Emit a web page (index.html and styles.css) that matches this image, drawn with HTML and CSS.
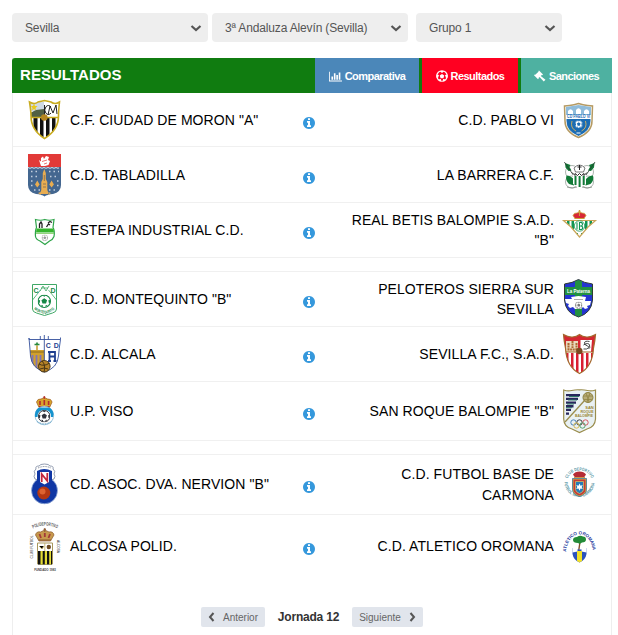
FILE: index.html
```html
<!DOCTYPE html>
<html lang="es">
<head>
    <meta charset="UTF-8">
    <meta name="viewport" content="width=device-width, initial-scale=1.0">
    <title>Resultados</title>
    <link rel="stylesheet" href="styles.css">
</head>
<body>
    <svg class="defs" width="0" height="0">
        <symbol id="info" viewBox="0 0 1792 1792"><path d="M1152 1376v-160q0-14-9-23t-23-9h-96v-512q0-14-9-23t-23-9h-320q-14 0-23 9t-9 23v160q0 14 9 23t23 9h96v320h-96q-14 0-23 9t-9 23v160q0 14 9 23t23 9h448q14 0 23-9t9-23zm-128-896v-160q0-14-9-23t-23-9h-192q-14 0-23 9t-9 23v160q0 14 9 23t23 9h192q14 0 23-9t9-23zm640 416q0 209-103 385.5t-279.5 279.5-385.5 103-385.5-103-279.5-279.5-103-385.5 103-385.5 279.5-279.5 385.5-103 385.5 103 279.5 279.5 103 385.5z"/></symbol>
        <symbol id="down" viewBox="0 0 12 8"><path d="M1.500 2 6 6l4.500-4" fill="none" stroke="#555" stroke-width="2.200"/></symbol>
        <symbol id="ball" viewBox="0 0 20 20"><circle cx="10" cy="10" r="9.200" fill="#fff" stroke="currentColor" stroke-width="1.600"/><path fill="currentColor" d="M10 5.500l4.200 3-1.600 5H7.400l-1.600-5zM7 1h6l-3 2.500zM1 8l3 .5L3 13l-2-1zM19 8l-3 .5 1 4.500 2-1zM5 15.500l3 .5v3zM15 15.500l-3 .5v3z"/></symbol>
    </svg>

    <form class="filters">
        <div class="select">Sevilla <svg width="12" height="8"><use href="#down"/></svg></div>
        <div class="select">3ª Andaluza Alevín (Sevilla) <svg width="12" height="8"><use href="#down"/></svg></div>
        <div class="select select-group">Grupo 1 <svg width="12" height="8"><use href="#down"/></svg></div>
    </form>

    <div class="panel">
        <div class="panel-header">
            <h1>RESULTADOS</h1>
            <a class="tab tab-blue">
                <svg width="13" height="11" viewBox="0 128 2048 1536"><path d="M640 896v512h-256v-512h256zm384-512v1024h-256v-1024h256zm1024 1152v128h-2048v-1536h128v1408h1920zm-640-896v768h-256v-768h256zm384-384v1152h-256v-1152h256z"/></svg>
                <span>Comparativa</span>
            </a>
            <a class="tab tab-red">
                <svg width="12" height="12" viewBox="0 0 24 24"><circle cx="12" cy="12" r="10.500" fill="none" stroke="#fff" stroke-width="2.400"/><path d="M12 8l4.500 3.200-1.700 5.300H9.200l-1.700-5.300zM7 2h10l-5 4zM1 9l5 1-2 6-3-1zM23 9l-5 1 2 6 3-1zM5 19l5-1v5zM19 19l-5-1v5z"/></svg>
                <span>Resultados</span>
            </a>
            <a class="tab tab-teal">
                <svg width="12" height="12" viewBox="0 0 24 24"><path d="M10 1l8 8-1.500 1.500-1-.5-2 2L23 19.500 19.500 23 11 14l-2 2 .5 1L8 18.500 0 10.500 1.500 9l1 .5 7-6.500-1-.5z"/></svg>
                <span>Sanciones</span>
            </a>
        </div>

        <div class="match">
            <svg class="crest" width="36" height="53" viewBox="0 0 36 53">
                <clipPath id="moron"><path d="M2.500 9q5 3 8.500 0l6.500-1.500L24 9q4 3 8.500 0-1 9-1 14 0 14-14 22.500Q4 37 4 23 4 18 2.500 9z"/></clipPath>
                <g clip-path="url(#moron)">
                    <path fill="#fff" d="M0 0h36v53H0z"/>
                    <path fill="#cfd9e4" d="M3 9h14v9H3z"/><path fill="#516044" d="M3 20l6-3 8-1v8H3z"/>
                    <path fill="#111" d="M6.500 25h4v20h-4zM13 25h3.500v21H13zM19 25h3.500v21H19zM25 25h3.500v20H25z"/>
                </g>
                <path fill="#e9c91c" d="M7 10.500l1 2.500h2.500L8.500 15l.5 2.500-2-1.500L5 17.500 5.500 15 4 13h2z"/>
                <path fill="none" stroke="#222" d="M24 14a3.500 4.500 0 1 0 0 6M21 22l2-9 3 7 3-8 1 9M17.500 12v10"/>
                <path fill="none" stroke="#c9ac20" stroke-width="1.600" d="M2.500 9q5 3 8.500 0l6.500-1.500L24 9q4 3 8.500 0-1 9-1 14 0 14-14 22.500Q4 37 4 23 4 18 2.500 9zM4 24.500h27"/>
                <circle cx="17.300" cy="24.500" r="3.300" fill="#b58520"/>
            </svg>
            <div class="team">C.F. CIUDAD DE MORON "A"</div>
            <svg class="info" width="14" height="14"><use href="#info"/></svg>
            <div class="team away">C.D. PABLO VI</div>
            <svg class="crest" width="36" height="53" viewBox="0 0 36 53">
                <path fill="#fff" stroke="#b59a62" stroke-width="1.500" d="M3.500 13l5-.5Q13 12 17.500 10.500q4.500 1.500 9 2l5 .5-.5 15q0 11-13.500 16.500Q4 39 4 28z"/>
                <path fill="#8fbcdb" d="M5 14l12.500-2L30 14v8H5z"/>
                <path fill="#fff" d="M7 21v-3q2.500-3.500 5 0v3zM15 21v-4q2.500-3.500 5 0v4zM23 21v-3q2.500-3.500 5 0v3z"/>
                <path fill="#1b6cb3" d="M5.500 26h24v2q0 10-12 15Q5.500 38 5.500 28z"/>
                <text class="micro" x="17.600" y="25.400" font-size="4.500" font-weight="bold" textLength="23" lengthAdjust="spacingAndGlyphs" fill="#1b6cb3">CD PABLO VI</text>
                <path fill="none" stroke="#c7ac67" d="M11 28q-2 7 4 10M24.500 28q2 7-4 10"/>
                <svg x="13.500" y="27" width="8.500" height="8.500" color="#1b6cb3"><use href="#ball"/></svg>
                <path stroke="#fff" d="M15.500 40h4"/>
            </svg>
        </div>

        <div class="match">
            <svg class="crest" width="36" height="55" viewBox="0 0 36 55">
                <path fill="#446790" d="M1 20h33v18q0 7-8 9-6 .5-8.500 2.500Q15 47.500 9 47q-8-2-8-9z"/>
                <path fill="#e23a38" d="M1 7h33v13H1z"/>
                <path fill="none" stroke="#fff" stroke-width=".8" d="M1 20.500l2 .8 2-.8 2 .8 2-.8 2 .8 2-.8 2 .8 2-.8 2 .8 2-.8 2 .8 2-.8 2 .8 2-.8 2 .8 1-.5"/>
                <path fill="#fff" d="M12 13l2 1.500V11l2-1.500 1 2.500 2-3 3 1-1 3 2 1-1.500 4L18 19h-4z"/>
                <path stroke="#e23a38" stroke-width=".7" d="M15 14.500l5-1.500M17 17l3-1"/>
                <path fill="none" stroke="#c3cfdd" stroke-width="1.400" stroke-dasharray="1.500 3" d="M4 24.500h9M22 24.500h10M4 29.500h8M23 29.500h9M4 34h3M30 34h3M4 38.500h3M30 38.500h3M7 43h6M22 43h7"/>
                <path fill="#e9ad51" d="M17.300 22l1.500 4v6l1.500 3v8l1.500 4h-9l1.500-4v-8l1.500-3v-6zM8 37.500l2.300-4 2.300 4-2.300 3zM22.300 37.500l2.300-4 2.300 4-2.300 3zM11 46l3-1v3zM24 46l-3-1v3z"/>
                <path stroke="#6b6058" stroke-width=".7" d="M17.300 28v6M16 37h3M16 40h3"/>
            </svg>
            <div class="team">C.D. TABLADILLA</div>
            <svg class="info" width="14" height="14"><use href="#info"/></svg>
            <div class="team away">LA BARRERA C.F.</div>
            <svg class="crest" width="36" height="55" viewBox="0 0 36 55">
                <g fill="#fff" stroke="#8a938c" stroke-width=".7"><circle cx="11" cy="25" r="6.500"/><circle cx="26" cy="25" r="6.500"/><circle cx="10.500" cy="35" r="6"/><circle cx="26.500" cy="35" r="6"/></g>
                <path fill="#117a37" d="M4 16l5.500 2-1 2 2 3.500-3 .5-3-3.500zM33.500 16L28 18l1 2-2 3.500 3 .5 3-3.500z"/>
                <path stroke="#2b3b30" stroke-width=".8" d="M3.300 15l9 13M34 15l-9 13"/>
                <path fill="#117a37" d="M5.500 28.500q4 0 7.500 4v6l-5-1.500q-4-4-2.500-8.500zM32 28.500q-4 0-7.500 4v6l5-1.500q4-4 2.500-8.500z"/>
                <path fill="#fff" d="M12 24h13v13l-6.500 4L12 37z"/>
                <path fill="#117a37" d="M13.500 29h2v9h-2zM17.600 29h2v11h-2zM21.700 29h2v9h-2z"/>
                <path fill="#fff" stroke="#555" stroke-width=".8" d="M13 21q5.500-6 11 0l-1.500 4h-8z"/>
                <path fill="none" stroke="#222" d="M18.500 18v5M16.500 20h4M11 25.500l3 3v-2l2.500 2 2-2 2 2 2.500-2v2l3-3"/>
                <path fill="none" stroke="#8a938c" stroke-width=".9" d="M6 40q6 2 10 0M21 40q5 2 10 0"/>
            </svg>
        </div>

        <div class="match">
            <svg class="crest" width="36" height="54" viewBox="0 0 36 54">
                <path fill="#fff" stroke="#2da449" stroke-width="1.200" d="M8.500 16.500q5 1.500 9.300 0 4.500 1.500 9.200 0l-1 8q2 3 1 9-1 3-4.500 4.500L18 41.500 13 38q-4-1.500-4.500-4.500-.5-6 1-9z"/>
                <path fill="#35b52c" d="M9.500 25.500h17l.5 4H9z"/>
                <path fill="none" stroke="#222" stroke-width="1.300" d="M12.500 25v-4l1.500-2 1 2v4M19.500 24l2-3 1.500 1M21 20l2-1.500 2 1"/>
                <path stroke="#77c85a" stroke-width=".8" d="M9 30.500h18"/>
                <svg x="14.500" y="31.500" width="6.500" height="6.500" color="#9a9a9a"><use href="#ball"/></svg>
            </svg>
            <div class="team">ESTEPA INDUSTRIAL C.D.</div>
            <svg class="info" width="14" height="14"><use href="#info"/></svg>
            <div class="team away">REAL BETIS BALOMPIE S.A.D. "B"</div>
            <svg class="crest" width="36" height="54" viewBox="0 0 36 54">
                <clipPath id="betis"><path d="M2.500 17.500h32L27 24l-8.500 10L10 24z"/></clipPath>
                <g clip-path="url(#betis)"><path fill="#fff" d="M0 17h36v18H0z"/><path fill="#119653" d="M6 17h2.500v18H6zM10.500 17H13v18h-2.500zM24 17h2.500v18H24zM28.500 17H31v18h-2.500zM15 30h2v4h-2zM20 30h2v4h-2z"/></g>
                <path fill="none" stroke="#c9a558" stroke-width="1.200" d="M2.500 17.500h32L27 24l-8.500 10L10 24z"/>
                <circle cx="18.500" cy="23" r="5.200" fill="#fff" stroke="#119653" stroke-width=".8"/>
                <path fill="none" stroke="#119653" stroke-width="1.100" d="M16 19.500v7M18.500 19.500h2q2 1.700 0 3.500h-2zM18.500 23h2q2.500 1.700 0 3.500h-2z"/>
                <path fill="#d82736" stroke="#caa13c" stroke-width=".8" d="M14 15.500l-2-3q1-3 4-2.500l2.500-1 2.500 1q3-.5 4 2.500l-2 3z"/>
                <path stroke="#caa13c" stroke-width="1.100" d="M18.500 7v6M17.300 8.200h2.400M13.500 15.500h10"/>
            </svg>
        </div>

        <div class="gap"></div>

        <div class="match">
            <svg class="crest" width="36" height="54" viewBox="0 0 36 54">
                <path fill="#fff" stroke="#3fa866" stroke-width="1" d="M5.500 12.500h24V37q0 3-4 4l-8 2.500L9.500 41q-4-1-4-4z"/>
                <path fill="none" stroke="#3fa866" stroke-width=".8" d="M5.500 28l8-10M29.500 28l-8-10M13 19l3-5 3 5 3-5M14 16h7"/>
                <text class="micro" x="9" y="20.500" font-size="7" font-weight="bold" fill="#168846">C</text>
                <text class="micro" x="26" y="20.500" font-size="7" font-weight="bold" fill="#168846">D</text>
                <svg x="10.500" y="22.500" width="13.500" height="13.500" color="#168846"><use href="#ball"/></svg>
                <path id="monte" fill="none" d="M7 37q10.500 9 21 0"/>
                <text class="micro arc" font-size="4" font-weight="bold" fill="#168846"><textPath href="#monte" textLength="23" lengthAdjust="spacingAndGlyphs">MONTEQUINTO</textPath></text>
            </svg>
            <div class="team">C.D. MONTEQUINTO "B"</div>
            <svg class="info" width="14" height="14"><use href="#info"/></svg>
            <div class="team away">PELOTEROS SIERRA SUR SEVILLA</div>
            <svg class="crest" width="36" height="54" viewBox="0 0 36 54">
                <path fill="#2434d0" stroke="#303b34" d="M3.500 12q8-1 14-4.500Q23 11 31.500 12v16q-1 13-14 17Q4.500 41 3.500 28z"/>
                <path fill="#229141" d="M14 9.500l3.500-1.500L21 9.500V43l-3.500 1.500L14 43zM4 15h27v8H4z"/>
                <text class="micro" x="17.500" y="21" font-size="5" font-weight="bold" textLength="23" lengthAdjust="spacingAndGlyphs" fill="#fff">La Paterna</text>
                <path fill="#fff" d="M10 25l7.500-1L25 25l-1 4h6l-1 4-3 1 1 2-3 1-2-2-2 2h-6l-2-2-3 1-2-2 1-2-3-1-1-4h7z"/>
                <path stroke="#8a8a8a" stroke-width=".7" d="M13 27.500h9"/>
                <svg x="14" y="29.500" width="7.500" height="7.500" color="#777"><use href="#ball"/></svg>
            </svg>
        </div>

        <div class="match">
            <svg class="crest" width="36" height="54" viewBox="0 0 36 54">
                <clipPath id="alcala"><path d="M2 11.500h31.500Q32 22 31.500 29q-1 12-14 16-13-4-14-16Q3 22 2 11.500z"/></clipPath>
                <g clip-path="url(#alcala)">
                    <path fill="#fff" d="M0 0h36v54H0z"/><path fill="#d0a02c" d="M2 23h15.500v22H2z"/>
                    <path stroke="#7f74b6" stroke-width="1.800" d="M5.500 28v12M9.500 28v14M13.500 28v14"/><path stroke="#8a6b1c" d="M2 25h15"/>
                </g>
                <path stroke="#2a8a3d" stroke-width="1.700" d="M7.500 17.500h5M10 15.500v3"/><path stroke="#c99a29" stroke-width="1.500" d="M10 18.500V23"/>
                <path fill="none" stroke="#34509c" stroke-width=".9" d="M2 12.500h31.500Q32 22 31.500 29q-1 12-14 16-13-4-14-16Q3 22 2 11zM13.300 9v3.500M17.300 8v32M21.300 9v3.500M33.500 10.500v2"/>
                <text class="micro" x="25.300" y="20.500" font-size="7" font-weight="bold" textLength="13" fill="#1f3f8f">CD</text>
                <path fill="none" stroke="#1f3f8f" stroke-width="1.800" d="M22.500 34v-9h5.500v9M22.500 29.500H28M21 34h3M26.500 34h3M21 25h2"/>
                <circle cx="17.300" cy="39.300" r="5.800" fill="#b58227" stroke="#3b2b13" stroke-width=".9"/>
                <path fill="none" stroke="#3b2b13" stroke-width=".9" d="M12 37q5 3 10.500-1M15 34q4 4 2 11M13 42q4-2 8 0"/>
            </svg>
            <div class="team">C.D. ALCALA</div>
            <svg class="info" width="14" height="14"><use href="#info"/></svg>
            <div class="team away">SEVILLA F.C., S.A.D.</div>
            <svg class="crest" width="36" height="54" viewBox="0 0 36 54">
                <clipPath id="sfc"><path d="M2.500 7.500q5 3 9 2.500 4 0 7-2.500 3 2.500 7 2.500 4 .5 9-2.500-.5 7-2 13.500-1 19-14 25.500Q5.500 40 4.500 21 3 14 2.500 7.500z"/></clipPath>
                <g clip-path="url(#sfc)">
                    <path fill="#d52631" d="M0 0h36v25H0z"/><path fill="#fff" d="M0 25h36v25H0z"/>
                    <path fill="#e9d9bd" d="M5 14h12v11H5z"/><path fill="#fff" d="M19.500 13H31l-1 12H19.500z"/>
                    <path fill="#d91f32" d="M5 26h2.500v20H5zM10 26h2.500v20H10zM15 26h2.500v20H15zM20 26h2.500v20H20zM25 26h2.500v20H25zM30 26h2v20h-2z"/>
                </g>
                <path stroke="#ad6932" stroke-width="2" stroke-dasharray="2 .6" d="M7.500 16v6M11.500 14v7M15.500 16v6M6.500 22.500h10"/>
                <path fill="none" stroke="#333" stroke-width=".9" d="M28.500 14.500q-5-1-5 1.500 0 2 3 3t-1 3h-3M22.500 18q5-3 6 0t-1 4"/>
                <path fill="none" stroke="#a4682d" stroke-width="1.200" d="M2.500 7.500q5 3 9 2.500 4 0 7-2.500 3 2.500 7 2.500 4 .5 9-2.500-.5 7-2 13.500-1 19-14 25.500Q5.500 40 4.500 21 3 14 2.500 7.500zM4.500 25h28"/>
                <circle cx="18.300" cy="24" r="3.200" fill="#7b4a22"/>
            </svg>
        </div>

        <div class="match">
            <svg class="crest" width="36" height="58" viewBox="0 0 36 58">
                <path fill="#d9a42c" stroke="#9c5a20" stroke-width=".7" d="M12 25.500L9.500 20q1-3.500 4.500-3l3.300-1.500L20.600 17q3.500-.5 4.500 3l-2.500 5.500z"/>
                <path stroke="#b52b2b" stroke-width="1.600" d="M13 19v4M17.300 18v5M21.600 19v4"/><path stroke="#b52b2b" d="M17.300 14v3M16.300 15.200h2M12 24.500h10.500"/>
                <circle cx="17.300" cy="33.500" r="9.300" fill="#fff" stroke="#86b9d6" stroke-width=".8"/>
                <path fill="#1693ce" d="M8 32q1-6 5-6.500h8.600q4 1 5 6.500l-.5 3h-2q0-7-6.800-7T10.500 35H8z"/>
                <svg x="11" y="28" width="12.500" height="12.500" color="#30343c"><use href="#ball"/></svg>
                <path fill="none" stroke="#7aaecd" stroke-width="1.300" stroke-dasharray="1 .7" d="M10 39.500q7.300 5 14.600 0"/>
            </svg>
            <div class="team">U.P. VISO</div>
            <svg class="info" width="14" height="14"><use href="#info"/></svg>
            <div class="team away">SAN ROQUE BALOMPIE "B"</div>
            <svg class="crest" width="36" height="58" viewBox="0 0 36 58">
                <path fill="#e9f1f3" stroke="#9a8d4d" stroke-width="1.200" d="M2.700 8q4 1.500 8 .5 4-1 7.800-.7 4-.3 8 .7 4 1 8-.5v29q-.5 8-8.500 10l-7.500 3.500L11 47q-8-2-8.300-10z"/>
                <path fill="#28275c" d="M5 12h14v2.300H5zM5 15.700h12V18H5zM5 19.400h10v2.300H5zM5 23.100h7.500v2.300H5zM5 26.800h5v2.300H5zM5 30.500h3v2.300H5z"/>
                <path stroke="#2c7764" d="M8 14.500h10M7 18h9M6 22h7M5 25.700h6"/>
                <path stroke="#9a8d4d" stroke-width="1.300" d="M4 40l20-22"/>
                <circle cx="27" cy="15.500" r="5" fill="#b8ad78" stroke="#8d813f"/><path stroke="#8d813f" stroke-width=".7" d="M22.500 14h9M23 17.500h8M25 11l3 9M29 11l-3 9"/>
                <text class="micro" x="28.500" y="27.300" font-size="4" font-weight="bold" fill="#9a8430">SAN</text>
                <text class="micro" x="26" y="31.300" font-size="4" font-weight="bold" textLength="13" lengthAdjust="spacingAndGlyphs" fill="#9a8430">ROQUE</text>
                <text class="micro" x="23" y="35.300" font-size="4" font-weight="bold" textLength="18" lengthAdjust="spacingAndGlyphs" fill="#9a8430">BALOMPIE</text>
                <g fill="none" stroke-width=".9"><circle cx="12.500" cy="40.500" r="2.700" stroke="#3d79b5"/><circle cx="18.500" cy="40.500" r="2.700" stroke="#333"/><circle cx="24.500" cy="40.500" r="2.700" stroke="#d14a53"/><circle cx="15.500" cy="43.500" r="2.700" stroke="#d9b544"/><circle cx="21.500" cy="43.500" r="2.700" stroke="#479b62"/></g>
            </svg>
        </div>

        <div class="gap"></div>

        <div class="match lifted">
            <svg class="crest" width="36" height="59" viewBox="0 0 36 59">
                <ellipse cx="17.500" cy="35.500" rx="13" ry="13.300" fill="#1037a4" stroke="#9eb4d8" stroke-width=".7"/>
                <path fill="#fff" stroke="#8792a8" stroke-width=".9" d="M8 24q-2-3 0-5-2-3 1-5-1-3 3-3 1-2 5.500-2t5.500 2q4 0 3 3 3 2 1 5 2 2 0 5l-3 1-1-9H12l-1 9z"/>
                <path fill="none" stroke="#7e8796" stroke-dasharray="1 .7" d="M11 13q6.500-3 13 0"/>
                <path fill="#1037a4" d="M10 16q7-4 15 0v14H10z"/>
                <path fill="#fff" d="M13 17h9v10l-4.500 2.500L13 27z"/>
                <path fill="none" stroke="#c2263b" stroke-width="1.800" d="M14.700 27v-8l5.600 7v-8"/>
                <circle cx="16.800" cy="38" r="6.500" fill="#b43712"/><circle cx="15.500" cy="36.500" r="3" fill="#dd6331"/>
            </svg>
            <div class="team">CD. ASOC. DVA. NERVION "B"</div>
            <svg class="info" width="14" height="14"><use href="#info"/></svg>
            <div class="team away tall">C.D. FUTBOL BASE DE CARMONA</div>
            <svg class="crest" width="36" height="59" viewBox="0 0 36 59">
                <path id="carTop" fill="none" d="M6.500 23.500a13 13 0 0 1 24 0"/>
                <path id="carBottom" fill="none" d="M3.500 27a15 15 0 0 0 30 0"/>
                <text class="micro arc" font-size="4.500" font-weight="bold" fill="#5795a5"><textPath href="#carTop" textLength="30" lengthAdjust="spacingAndGlyphs">CLUB DEPORTIVO</textPath></text>
                <text class="micro arc" font-size="4.500" font-weight="bold" fill="#5795a5"><textPath href="#carBottom" textLength="46" lengthAdjust="spacingAndGlyphs">FUTBOL BASE CARMONA</textPath></text>
                <path fill="#b52c35" d="M14 22.500l-2-3q2-3 6.500-3t6.500 3l-2 3z"/><path stroke="#c9974b" d="M13 22.500h11"/>
                <path fill="#d3b33c" stroke="#26689b" stroke-width=".7" d="M11.500 23.500h14v11q0 5-7 7-7-2-7-7z"/>
                <path fill="#c43a3b" d="M12.500 24.500h12v10q0 4-6 6-6-2-6-6z"/><path fill="#267bb9" stroke="#e6c55c" stroke-width=".7" d="M14.500 26.500h8v8q0 2.500-4 4-4-1.500-4-4z"/>
                <path fill="#fff" d="M18.500 28.500l1 2.200 2.200-.7-1 2 1 2-2.200-.5-1 2.300-1-2.300-2.200.5 1-2-1-2 2.200.7z"/>
            </svg>
        </div>

        <div class="match last lifted">
            <svg class="crest" width="36" height="63" viewBox="0 0 36 63">
                <path id="alcTop" fill="none" d="M6 13.500q12-6 24 0"/>
                <text class="micro arc" font-size="5" font-weight="bold" fill="#555"><textPath href="#alcTop" textLength="25" lengthAdjust="spacingAndGlyphs">POLIDEPORTIVO</textPath></text>
                <text class="micro" transform="translate(5.500 32) rotate(-90)" font-size="3.800" textLength="23" lengthAdjust="spacingAndGlyphs" fill="#333">CLUB FUTBOL</text>
                <text class="micro" transform="translate(30 31.500) rotate(90)" font-size="3.800" textLength="13" lengthAdjust="spacingAndGlyphs" fill="#333">ALCOSA</text>
                <path fill="#c79a4d" stroke="#8b572e" stroke-width=".7" d="M12 26l-3.500-6q1-4 5-3l4.300-2 4.200 2q4-1 5 3l-3.500 6z"/>
                <path stroke="#a33a38" stroke-width="1.800" d="M12.500 19l1.500 4M17.800 18v4M23 19l-1.500 4"/><path stroke="#8b572e" d="M17.800 13v4M16.500 14.300h2.500M11.500 25h12.500"/>
                <path fill="#fff" stroke="#a8975c" d="M10.500 28h15v21h-15z"/>
                <path fill="#111" d="M11 36h14v13.500H11z"/><path fill="#e4dc35" d="M13.500 36h2.200v13.500h-2.200zM17.800 36H20v13.500h-2.200zM22.200 36h1.800v13.500h-1.800z"/>
                <circle cx="21.800" cy="32" r="2.200" fill="#6d4a22"/><path stroke="#c0ae62" stroke-width=".8" d="M17.800 28v8M12 31l3 3 2-3"/>
                <text class="micro" x="18" y="56" font-size="2.900" font-weight="bold" fill="#444">FUNDADO 1983</text>
            </svg>
            <div class="team">ALCOSA POLID.</div>
            <svg class="info" width="14" height="14"><use href="#info"/></svg>
            <div class="team away">C.D. ATLETICO OROMANA</div>
            <svg class="crest" width="36" height="63" viewBox="0 0 36 63">
                <path id="oro" fill="none" d="M5 37C7 13.500 30 13.500 32 37"/>
                <text class="micro arc" font-size="4.500" font-weight="bold" fill="#23369c"><textPath href="#oro" textLength="47" lengthAdjust="spacingAndGlyphs">ATLETICO OROMANA</textPath></text>
                <path stroke="#80502d" stroke-width="1.400" d="M19 27l-1.500 10"/>
                <path fill="#238b38" d="M12 25q0-3 4-3 3-2 6-.5 3 0 3 3 0 3-4 3-2 2-4 .5-5 0-5-3z"/>
                <path fill="#2c52bd" d="M11.500 33q7 3 14 0v6q-1 6-7 8.500-6-2.500-7-8.500z"/><path fill="#fff" d="M11.500 32.500l5 1v3l-5 1zM25.500 32.500l-5 1v3l5 1z"/>
                <path fill="#f0e028" d="M16 36h5v10l-2.500 1.500L16 46z"/>
            </svg>
        </div>

        <div class="pager">
            <button class="pager-btn"><svg width="7" height="10" viewBox="0 0 7 10"><path d="M5.500 1L2 5l3.500 4"/></svg>Anterior</button>
            <strong>Jornada 12</strong>
            <button class="pager-btn next">Siguiente<svg width="7" height="10" viewBox="0 0 7 10"><path d="M1.500 1L5 5 1.500 9"/></svg></button>
        </div>
    </div>
</body>
</html>
```
FILE: styles.css
```css
* {
    box-sizing: border-box;
}
body {
    margin: 0;
    padding: 13px 6px 0 12px;
    background: #fff;
    font-family: "Liberation Sans", Arial, sans-serif;
    color: #000;
}
.defs {
    position: absolute;
}
.filters {
    display: flex;
    gap: 4px;
    margin-bottom: 16px;
}
.select {
    display: flex;
    align-items: center;
    justify-content: space-between;
    width: 196px;
    height: 29px;
    padding: 0 6px 0 13px;
    border-radius: 4px;
    background: #eee;
    color: #555;
    font-size: 12px;
    letter-spacing: -0.15px;
}
.select-group {
    width: 146px;
    margin-left: 4px;
}
.panel {
    border: 1px solid #eee;
    border-width: 0 1px;
}
.panel-header {
    display: flex;
    height: 35px;
    margin: 0 -1px;
    background: #107c10;
    border-radius: 3px 0 0 0;
    color: #fff;
}
.panel-header h1 {
    flex: 1;
    margin: 0;
    padding-left: 8px;
    font-size: 15px;
    line-height: 34px;
    letter-spacing: 0.05px;
}
.tab {
    display: flex;
    align-items: center;
    justify-content: center;
    gap: 3px;
    padding-top: 1px;
    font-size: 11px;
    font-weight: bold;
    letter-spacing: -0.55px;
}
.tab svg {
    fill: #fff;
}
.tab-blue {
    width: 104px;
    margin-right: 3px;
    background: #4b87b9;
}
.tab-red {
    width: 96px;
    margin-right: 3px;
    background: #ff0021;
}
.tab-teal {
    width: 91px;
    background: #4eb1a1;
}
.match {
    display: grid;
    grid-template-columns: 36px 210px 72px 209px 36px;
    align-items: center;
    padding-left: 14px;
    border-bottom: 1px solid #f0f0f0;
}
.match.last {
    border-bottom: 0;
}
.gap {
    height: 14px;
    border-bottom: 1px solid #f0f0f0;
}
.crest {
    display: block;
    overflow: visible;
}
.team {
    padding-left: 7px;
    font-size: 14px;
    line-height: 20px;
    letter-spacing: 0.08px;
    white-space: nowrap;
}
.team.away {
    padding: 0;
    text-align: right;
    white-space: normal;
}
.team.tall {
    line-height: 21px;
}
.team.away + .crest {
    margin-left: 7px;
}
.info {
    display: block;
    justify-self: center;
    margin-top: 6px;
    fill: #3598dc;
}
.lifted .team:not(.tall) {
    padding-bottom: 2px;
}
.lifted .info {
    margin-top: 4px;
}
.micro {
    text-anchor: middle;
}
.micro.arc {
    text-anchor: start;
}
.pager {
    display: flex;
    align-items: center;
    padding: 29px 0 8px 188px;
    color: #333;
    font-size: 12px;
    letter-spacing: -0.2px;
}
.pager strong {
    width: 87px;
    text-align: center;
}
.pager-btn {
    display: flex;
    align-items: center;
    justify-content: center;
    gap: 8px;
    width: 64px;
    height: 20px;
    padding: 0;
    border: 0;
    border-radius: 2px;
    background: #e1e5ec;
    color: #666;
    font-family: inherit;
    font-size: 10px;
}
.pager-btn.next {
    width: 71px;
}
.pager-btn svg {
    fill: none;
    stroke: #555;
    stroke-width: 2;
}
```
